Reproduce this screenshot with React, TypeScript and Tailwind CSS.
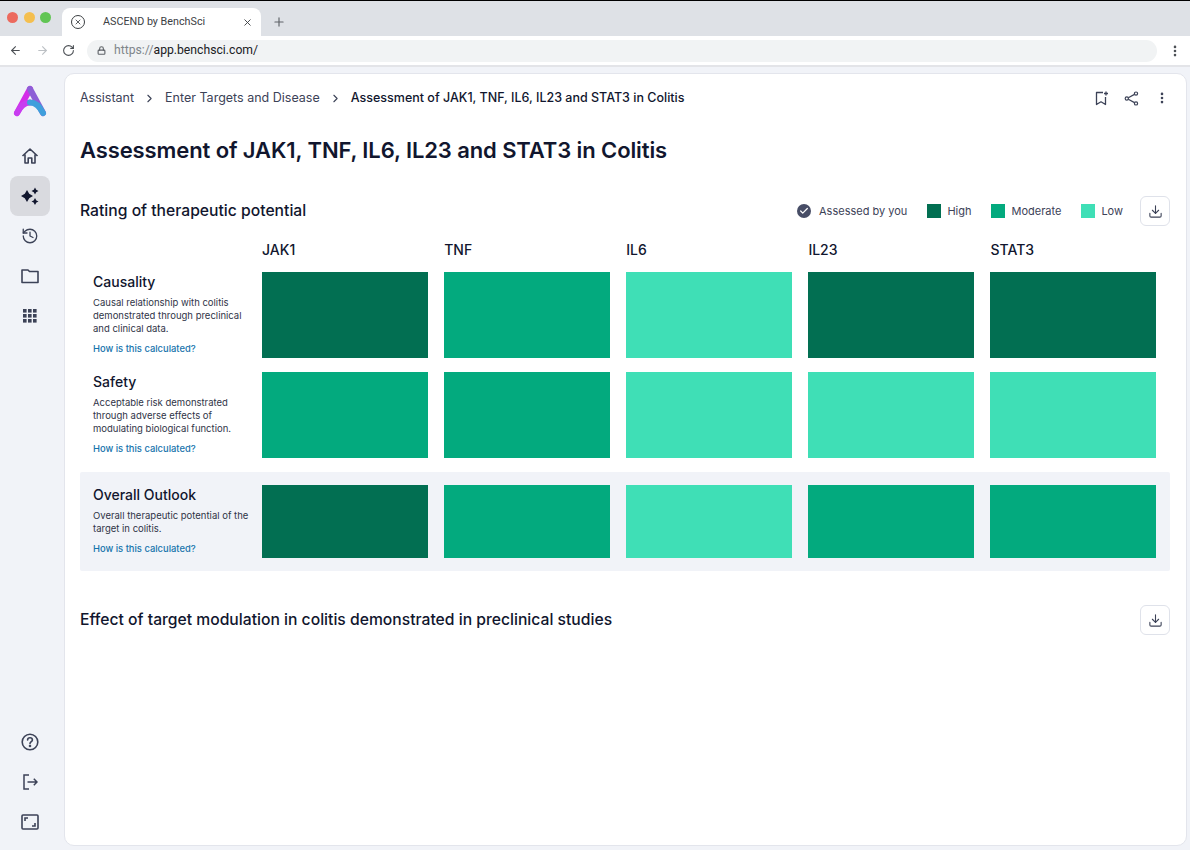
import { Fragment } from "react";
import { ArrowLeft, ArrowRight, ChevronRight, Download, EllipsisVertical, History, Lock, Plus, RotateCw, X, Check } from "lucide-react";

const HIGH = "bg-[#026f52]";
const MOD = "bg-[#03aa7e]";
const LOW = "bg-[#3fdfb6]";

const targets = ["JAK1", "TNF", "IL6", "IL23", "STAT3"];

const rows = [
  {
    title: "Causality",
    body: ["Causal relationship with colitis", "demonstrated through preclinical", "and clinical data."],
    cells: [HIGH, MOD, LOW, HIGH, HIGH],
  },
  {
    title: "Safety",
    body: ["Acceptable risk demonstrated", "through adverse effects of", "modulating biological function."],
    cells: [MOD, MOD, LOW, LOW, LOW],
  },
];

const overall = {
  title: "Overall Outlook",
  body: ["Overall therapeutic potential of the", "target in colitis."],
  cells: [HIGH, MOD, LOW, MOD, MOD],
};

function Logo() {
  return (
    <svg width="36" height="36" viewBox="0 0 36 36" fill="none">
      <path d="M18 5 L5 29" stroke="#d42ce8" strokeWidth="6" strokeLinecap="round" />
      <path d="M18 5 L31 29" stroke="#8d5fd6" strokeWidth="6" strokeLinecap="round" />
      <path d="M5 29 C9 21 13 18.5 18 18.5" stroke="#c83cf0" strokeWidth="6" strokeLinecap="round" />
      <path d="M18 18.5 C23 18.5 27 21 31 29" stroke="#3f9fdc" strokeWidth="6" strokeLinecap="round" />
    </svg>
  );
}

function Sparkle() {
  return (
    <svg width="20" height="20" viewBox="0 0 20 20" fill="#11162e">
      <path d="M7 4 L9.2 7.8 L13 10 L9.2 12.2 L7 16 L4.8 12.2 L1 10 L4.8 7.8 Z" />
      <path d="M15 1.5 L16.2 3.8 L18.5 5 L16.2 6.2 L15 8.5 L13.8 6.2 L11.5 5 L13.8 3.8 Z" />
      <path d="M15 12 L16.4 14.6 L18.5 15.5 L16.4 16.6 L15 19 L13.6 16.6 L11.5 15.5 L13.6 14.6 Z" />
    </svg>
  );
}

function Home() {
  return (
    <svg width="18" height="18" viewBox="0 0 18 18" fill="none" stroke="currentColor" strokeWidth="1.6" strokeLinejoin="round">
      <path d="M1.5 9 L9 2 L16.5 9 M4 7.5 V16 H7.2 V11 H10.8 V16 H14 V7.5" />
    </svg>
  );
}

function FolderIcon() {
  return (
    <svg width="18" height="16" viewBox="0 0 18 16" fill="none" stroke="currentColor" strokeWidth="1.6">
      <path d="M1 2 H7 L8.5 3.5 H17 V14.5 H1 Z" strokeLinejoin="round" />
    </svg>
  );
}

function Apps() {
  return (
    <svg width="14" height="14" viewBox="0 0 14 14" fill="currentColor">
      {[0, 5, 10].flatMap((x) => [0, 5, 10].map((y) => <rect key={`${x}-${y}`} x={x} y={y} width="3.6" height="3.6" />))}
    </svg>
  );
}

function Help() {
  return (
    <svg width="18" height="18" viewBox="0 0 18 18" fill="none" stroke="currentColor" strokeWidth="1.6">
      <circle cx="9" cy="9" r="7.8" />
      <path d="M6.6 7 C6.6 5.6 7.7 4.8 9 4.8 C10.4 4.8 11.4 5.7 11.4 6.9 C11.4 8.6 9 8.7 9 10.6" strokeLinecap="round" />
      <circle cx="9" cy="13" r="0.5" fill="currentColor" />
    </svg>
  );
}

function Exit() {
  return (
    <svg width="15" height="16" viewBox="0 0 15 16" fill="none" stroke="currentColor" strokeWidth="1.5">
      <path d="M6 1 H1 V15 H6 M4.5 8 H14 M10.8 4.8 L14 8 L10.8 11.2" />
    </svg>
  );
}

function BookmarkPlus() {
  return (
    <svg width="14" height="15" viewBox="0 0 14 15" fill="none" stroke="currentColor" strokeWidth="1.3">
      <path d="M8 1.5 H1.5 V13.5 L6 10.8 L10.5 13.5 V6" strokeLinejoin="round" />
      <path d="M11 0.5 V4.5 M9 2.5 H13" />
    </svg>
  );
}

function ShareIcon() {
  return (
    <svg width="15" height="15" viewBox="0 0 15 15" fill="none" stroke="currentColor" strokeWidth="1.2">
      <circle cx="12" cy="2.6" r="1.6" />
      <circle cx="12" cy="12.4" r="1.6" />
      <circle cx="2.8" cy="7.5" r="1.6" />
      <path d="M10.5 3.4 L4.3 6.7 M4.3 8.3 L10.5 11.6" />
    </svg>
  );
}

function Legend({ color, label }: { color: string; label: string }) {
  return (
    <div className="flex items-center gap-[6px]">
      <span className={`h-[14px] w-[14px] ${color}`} />
      <span className="text-[11px] text-[#3c4257]">{label}</span>
    </div>
  );
}

function DownloadButton() {
  return (
    <button className="flex h-[30px] w-[30px] items-center justify-center rounded-[6px] border border-[#dfe2ea] bg-white text-[#3c4257]">
      <Download size={15} strokeWidth={1.75} />
    </button>
  );
}

function Row({ row, tall }: { row: typeof overall; tall?: boolean }) {
  return (
    <div className="flex gap-[16.1px]">
      <div className="w-[166px] shrink-0 pl-[13px]">
        <div className="text-[14px] font-medium leading-[20px] text-[#11162e]">{row.title}</div>
        <div className="mt-[4px] text-[9.5px] leading-[13px] text-[#2f3447]">
          {row.body.map((l) => (
            <div key={l} className="whitespace-nowrap">{l}</div>
          ))}
        </div>
        <div className="mt-[7px] whitespace-nowrap text-[9.4px] font-medium leading-[13px] text-[#1673ac]">How is this calculated?</div>
      </div>
      {row.cells.map((c, i) => (
        <div key={i} className={`w-[166px] shrink-0 ${tall ? "h-[86px]" : "h-[73px]"} ${c}`} />
      ))}
    </div>
  );
}

export default function App() {
  return (
    <div className="flex h-[850px] w-[1190px] flex-col overflow-hidden bg-[#f1f3f8] font-['Inter',sans-serif]">
      {/* browser chrome */}
      <div className="flex h-[36px] shrink-0 items-end border-t border-black bg-[#dee1e6]">
        <div className="flex h-full items-center gap-[5.5px] self-center pl-[7px] pr-[11px] pb-[2px]">
          <span className="h-[11px] w-[11px] rounded-full bg-[#ec6a5e]" />
          <span className="h-[11px] w-[11px] rounded-full bg-[#f4bf4f]" />
          <span className="h-[11px] w-[11px] rounded-full bg-[#61c554]" />
        </div>
        <div className="flex h-[28px] w-[199px] items-center rounded-t-[8px] bg-white pl-[9px] pr-[8px]">
          <span className="flex h-[14px] w-[14px] items-center justify-center rounded-full border-[1.5px] border-[#3c4043] text-[#3c4043]">
            <X size={8} strokeWidth={2.5} />
          </span>
          <span className="ml-[18px] flex-1 font-['Roboto',sans-serif] text-[10.75px] text-[#3c4043]">ASCEND by BenchSci</span>
          <X size={11} strokeWidth={2} className="text-[#3c4043]" />
        </div>
        <div className="flex h-[28px] items-center pl-[11px] text-[#5f6368]">
          <Plus size={14} strokeWidth={2} />
        </div>
      </div>
      <div className="flex h-[31px] shrink-0 items-center border-b-2 border-[#e3e4e8] bg-white pl-[9px] pr-[8px]">
        <ArrowLeft size={13} strokeWidth={2} className="text-[#4b4f54]" />
        <ArrowRight size={13} strokeWidth={2} className="ml-[14px] text-[#bcc0c4]" />
        <RotateCw size={13} strokeWidth={2} className="ml-[13px] text-[#4b4f54]" />
        <div className="ml-[12px] flex h-[22px] flex-1 items-center rounded-full bg-[#f1f3f4] pl-[10px]">
          <Lock size={9} strokeWidth={3} className="text-[#5f6368]" />
          <span className="ml-[8px] font-['Roboto',sans-serif] text-[12.2px] text-[#80868b]">
            https://<span className="text-[#202124]">app.benchsci.com/</span>
          </span>
        </div>
        <EllipsisVertical size={14} strokeWidth={2.5} className="ml-[11px] text-[#4b4f54]" />
      </div>

      <div className="flex min-h-0 flex-1">
        {/* sidebar */}
        <aside className="flex w-[64px] shrink-0 flex-col items-center pb-[8px] pt-[17px] pr-[4px] text-[#3c4257]">
          <Logo />
          <div className="mt-[16px] flex flex-col items-center">
            {[<Home key="h" />, <Sparkle key="s" />, <History key="hi" size={18} strokeWidth={1.75} />, <FolderIcon key="f" />, <Apps key="g" />].map((icon, i) => (
              <div key={i} className={`flex h-[40px] w-[40px] items-center justify-center rounded-[8px] ${i === 1 ? "bg-[#d9dadf]" : ""}`}>
                {icon}
              </div>
            ))}
          </div>
          <div className="mt-auto flex flex-col items-center">
            <div className="flex h-[40px] w-[40px] items-center justify-center"><Help /></div>
            <div className="flex h-[40px] w-[40px] items-center justify-center"><Exit /></div>
            <div className="flex h-[40px] w-[40px] items-center justify-center">
              <svg width="18" height="16" viewBox="0 0 18 16" fill="none" stroke="currentColor" strokeWidth="1.6">
                <rect x="1" y="1" width="16" height="14" rx="1" />
                <path d="M4 7V4h3M14 9v3h-3" />
              </svg>
            </div>
          </div>
        </aside>

        {/* main card */}
        <main className="mb-[4px] mr-[3px] mt-[6px] flex-1 rounded-[10px] border border-[#e3e5ec] bg-white pl-[15px] pr-[16px]">
          <div className="flex h-[48px] items-center text-[12.5px]">
            <span className="text-[#3c4257]">Assistant</span>
            <ChevronRight size={13} strokeWidth={2} className="mx-[9px] text-[#3c4257]" />
            <span className="text-[#3c4257]">Enter Targets and Disease</span>
            <ChevronRight size={13} strokeWidth={2} className="mx-[9px] text-[#3c4257]" />
            <span className="text-[12.5px] font-medium text-[#11162e]">Assessment of JAK1, TNF, IL6, IL23 and STAT3 in Colitis</span>
            <div className="ml-auto flex items-center pr-[1px] text-[#3c4257]">
              <BookmarkPlus />
              <span className="ml-[15px]"><ShareIcon /></span>
              <EllipsisVertical size={14} strokeWidth={2.5} className="ml-[16px]" />
            </div>
          </div>
          <h1 className="mt-[13px] text-[22px] font-semibold leading-[30px] tracking-[-0.1px] text-[#11162e]">
            Assessment of JAK1, TNF, IL6, IL23 and STAT3 in Colitis
          </h1>
          <div className="mt-[31px] flex h-[30px] items-center">
            <h2 className="text-[15.7px] font-medium text-[#11162e]">Rating of therapeutic potential</h2>
            <div className="ml-auto flex items-center gap-[20px]">
              <div className="flex items-center gap-[8px]">
                <span className="flex h-[14px] w-[14px] items-center justify-center rounded-full bg-[#474d66] text-white">
                  <Check size={10} strokeWidth={3} />
                </span>
                <span className="text-[11px] text-[#3c4257]">Assessed by you</span>
              </div>
              <Legend color={HIGH} label="High" />
              <Legend color={MOD} label="Moderate" />
              <Legend color={LOW} label="Low" />
              <div className="-ml-[3px]">
                <DownloadButton />
              </div>
            </div>
          </div>
          <div className="mt-[13px] flex h-[20px] items-center gap-[16.1px] pl-[182.1px] text-[14px] font-medium text-[#11162e]">
            {targets.map((t) => (
              <div key={t} className="w-[166px] shrink-0">{t}</div>
            ))}
          </div>
          <div className="mt-[13px] flex flex-col gap-[14px]">
            {rows.map((r) => (
              <Fragment key={r.title}>
                <Row row={r} tall />
              </Fragment>
            ))}
          </div>
          <div className="mt-[14px] rounded-[2px] bg-[#f1f3f8] py-[13px]">
            <Row row={overall} />
          </div>
          <div className="mt-[34px] flex h-[30px] items-center justify-between">
            <h2 className="text-[15.7px] font-medium text-[#11162e]">Effect of target modulation in colitis demonstrated in preclinical studies</h2>
            <DownloadButton />
          </div>
        </main>
      </div>
    </div>
  );
}
